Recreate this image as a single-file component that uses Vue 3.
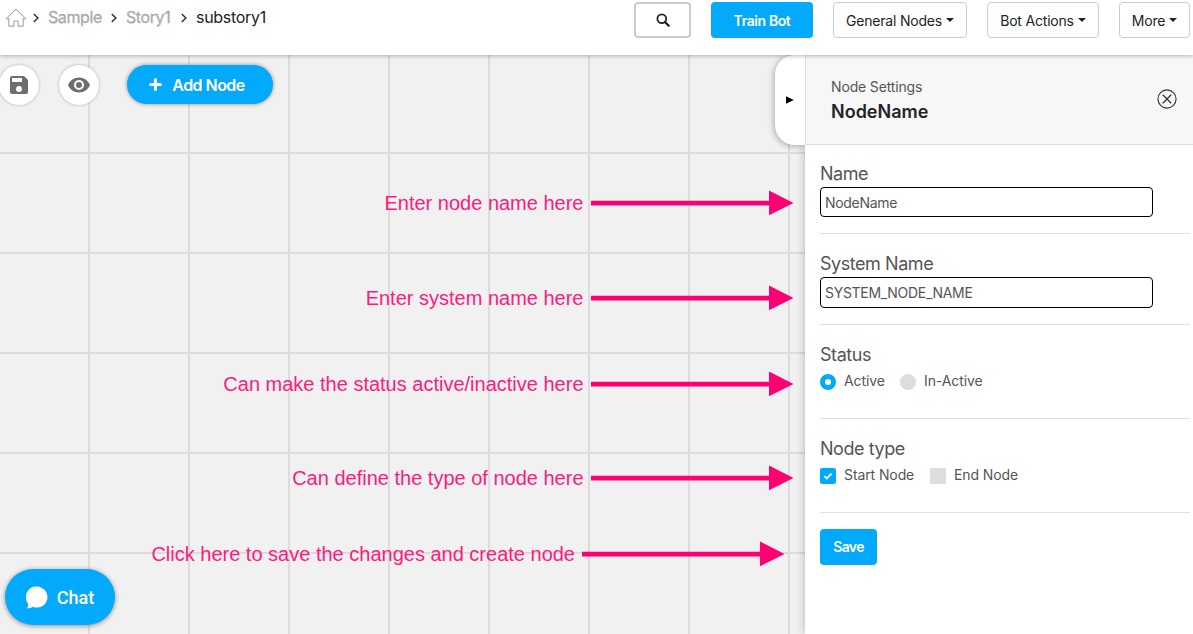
<script setup>
const crumbs = ['Sample', 'Story1']
const menus = [
  { label: 'General Nodes', cls: 'general' },
  { label: 'Bot Actions', cls: 'actions' },
  { label: 'More', cls: 'more' }
]
const notes = [
  { text: 'Enter node name here', cls: 'n1' },
  { text: 'Enter system name here', cls: 'n2' },
  { text: 'Can make the status active/inactive here', cls: 'n3' },
  { text: 'Can define the type of node here', cls: 'n4' },
  { text: 'Click here to save the changes and create node', cls: 'n5' }
]
</script>

<template>
  <div class="app">
    <header class="topbar">
      <nav class="crumbs">
        <svg class="home" width="22" height="20" viewBox="0 0 22 20" fill="none" stroke="#999" stroke-width="1">
          <path d="M1.2 10.6 11 1.3l9.800 9.300-.9 1-1.700-1.500v8.100h-5.200v-5.300H9v5.300H3.800v-8.100l-1.700 1.500z" stroke-linejoin="round" />
        </svg>
        <svg class="chev" width="6" height="10" viewBox="0 0 6 10"><path d="M.8 1 4.900 5 .8 9" /></svg>
        <template v-for="c in crumbs" :key="c">
          <span class="crumb" :class="c.toLowerCase()">{{ c }}</span>
          <svg class="chev" width="6" height="10" viewBox="0 0 6 10"><path d="M.8 1 4.900 5 .8 9" /></svg>
        </template>
        <span class="crumb current">substory1</span>
      </nav>
      <div class="actions-bar">
        <button class="btn search">
          <svg width="14" height="14" viewBox="0 0 14 14" fill="none" stroke="#222">
            <circle cx="5.800" cy="5.800" r="4.400" stroke-width="1.800" />
            <path d="m9 9 3.700 3.700" stroke-width="2.300" stroke-linecap="round" />
          </svg>
        </button>
        <button class="btn train"><span>Train Bot</span></button>
        <button v-for="m in menus" :key="m.label" class="btn menu" :class="m.cls">
          <span>{{ m.label }}</span><i class="caret"></i>
        </button>
      </div>
    </header>

    <main class="workspace">
      <section class="canvas">
        <div class="tools">
          <button class="round">
            <svg width="24" height="24" viewBox="0 0 24 24" fill="#6e6e6e">
              <path d="M17 3H5a2 2 0 0 0-2 2v14a2 2 0 0 0 2 2h14c1.100 0 2-.9 2-2V7zm-5 16a3 3 0 1 1 0-6 3 3 0 0 1 0 6m3-10H5V5h10z" />
            </svg>
          </button>
          <button class="round eye">
            <svg width="24" height="24" viewBox="0 0 24 24" fill="#6e6e6e">
              <path d="M12 4.500C7 4.500 2.730 7.610 1 12c1.730 4.390 6 7.500 11 7.500s9.270-3.110 11-7.500c-1.730-4.390-6-7.500-11-7.500M12 17a5 5 0 1 1 0-10 5 5 0 0 1 0 10m0-8a3 3 0 1 0 0 6 3 3 0 0 0 0-6" />
            </svg>
          </button>
          <button class="add">
            <svg width="13" height="13" viewBox="0 0 13 13" stroke="#fff" stroke-width="3" stroke-linecap="round">
              <path d="M6.500 1.600v9.800M1.600 6.500h9.800" />
            </svg>
            <span>Add Node</span>
          </button>
        </div>

        <div v-for="n in notes" :key="n.cls" class="note" :class="n.cls">
          <span>{{ n.text }}</span>
          <svg width="203" height="26" viewBox="0 0 203 26" fill="#ff0073">
            <path d="M0 10.700h178V.5L202.500 13 178 25.200V15.500H0z" />
          </svg>
        </div>

        <button class="chat">
          <svg width="22" height="23" viewBox="0 0 22 23" fill="#fff">
            <path d="M11 .6a10.500 10.500 0 1 1-4.300 20.100c-1.600 1.200-3.600 1.700-5.700 1.500.8-1.200 1.300-2.500 1.200-4.500A10.500 10.500 0 0 1 11 .6z" />
          </svg>
          <span>Chat</span>
        </button>
        <button class="handle">
          <svg width="8" height="8" viewBox="0 0 8 8"><path d="M0 .2 7.800 4 0 7.800z" /></svg>
        </button>
      </section>

      <aside class="panel">
        <div class="panel-head">
          <div class="titles">
            <span class="sub">Node Settings</span>
            <strong class="title">NodeName</strong>
          </div>
          <svg class="close" width="20" height="20" viewBox="0 0 20 20" fill="none" stroke="#333">
            <circle cx="10" cy="10" r="9.100" stroke-width="1.100" />
            <path d="m5.800 5.800 8.400 8.400m0-8.400-8.400 8.400" stroke-width="1.300" />
          </svg>
        </div>
        <div class="body">
          <div class="group name">
            <label class="heading">Name</label>
            <div class="field">NodeName</div>
          </div>
          <div class="group system">
            <label class="heading">System Name</label>
            <div class="field">SYSTEM_NODE_NAME</div>
          </div>
          <div class="group status">
            <div class="heading">Status</div>
            <div class="options">
              <i class="radio on"></i><span class="o1">Active</span>
              <i class="radio"></i><span class="o2">In-Active</span>
            </div>
          </div>
          <div class="group type">
            <div class="heading">Node type</div>
            <div class="options">
              <i class="check on">
                <svg width="16" height="16" viewBox="0 0 16 16" fill="none" stroke="#fff" stroke-width="1.800"><path d="m4.500 8.200 2.300 2.200 4.700-4.700" /></svg>
              </i><span class="o3">Start Node</span>
              <i class="check"></i><span class="o4">End Node</span>
            </div>
          </div>
          <button class="btn save"><span>Save</span></button>
        </div>
      </aside>
    </main>
  </div>
</template>

<style>
body { margin: 0; overflow: hidden; }
</style>

<style scoped>
.app { width: 1193px; height: 634px; display: flex; flex-direction: column; overflow: hidden; background: #fff; font-family: Inter, "Liberation Sans", sans-serif; color: #212529; }
* { box-sizing: border-box; }
button { font-family: inherit; padding: 0; border: 0; white-space: nowrap; }
svg { display: block; flex: none; }
.topbar { height: 55px; flex: none; display: flex; justify-content: space-between; background: #fff; box-shadow: 0 1px 4px rgba(0,0,0,.28); position: relative; z-index: 5; }
.crumbs { display: flex; align-items: center; height: 35px; padding-left: 5px; font-size: 16px; }
.home { margin-right: 6px; }
.chev { fill: none; stroke: #333; stroke-width: 1.500; }
.crumb { color: #aaa; -webkit-text-stroke: .3px; white-space: nowrap; margin-left: 9px; letter-spacing: -.4px; line-height: 20px; padding-bottom: 2px; }
.sample { width: 63px; }
.story1 { width: 55px; }
.story1, .current { margin-left: 9px; }
.current { color: #222; -webkit-text-stroke: 0; letter-spacing: -.3px; }
.actions-bar { display: flex; gap: 20px; padding: 2px 3px 0 0; }
.btn { height: 36px; display: flex; align-items: center; justify-content: center; border-radius: 4px; font-size: 14px; color: #222; background: #fff; letter-spacing: -.2px; }
.search { width: 57px; border: 2px solid #ccc; }
.train { width: 102px; background: #03a9fb; color: #fff; font-weight: 600; letter-spacing: -.4px; }
.menu { border: 1px solid #ccc; }
.general { width: 134px; }
.actions { width: 112px; }
.more { width: 71px; }
.caret { border: 4px solid transparent; border-top-color: #222; border-bottom: 0; margin-left: 4px; }
.workspace { flex: 1; display: flex; min-height: 0; }
.canvas { width: 805px; flex: none; position: relative; background-color: #f1f1f1; background-image: linear-gradient(#dcdcdc 2px, transparent 2px), linear-gradient(90deg, #dcdcdc 2px, transparent 2px); background-size: 100px 100px; background-position: 0 -3px, -12px 0; }
.tools { display: flex; align-items: center; height: 60px; }
.round { width: 40px; height: 40px; border-radius: 50%; background: #fff; display: flex; align-items: center; justify-content: center; box-shadow: 0 0 3px rgba(0,0,0,.3); margin-left: -1px; }
.eye { margin-left: 20px; }
.add { width: 146px; height: 39px; border-radius: 20px; margin: 0 0 1px 28px; padding-right: 6px; background: #03a9fb; color: #fff; display: flex; align-items: center; justify-content: center; gap: 10px; font-size: 16px; font-weight: 600; letter-spacing: -.55px; box-shadow: 0 0 4px rgba(0,0,0,.4); }
.note { position: absolute; right: 11.500px; display: flex; align-items: center; gap: 7px; height: 26px; color: #ff1a7d; font: 20px/26px "Liberation Sans", Arial, sans-serif; white-space: nowrap; letter-spacing: 0; }
.n1 { top: 135px; }
.n2 { top: 230px; }
.n3 { top: 316px; }
.n4 { top: 410px; }
.n5 { top: 486px; right: 20px; }
.chat { position: absolute; left: 5px; top: 514px; width: 110px; height: 56px; border-radius: 28px; background: #03a9fb; color: #fff; display: flex; align-items: center; justify-content: center; gap: 9px; font: 500 18px Roboto, sans-serif; box-shadow: 0 1px 5px rgba(0,0,0,.4); }
.handle { position: absolute; z-index: 2; right: 0; top: 0; width: 30px; height: 90px; border-radius: 20px 0 0 20px; background: #fff; display: flex; align-items: center; padding-left: 11px; box-shadow: -1px 1px 6px rgba(0,0,0,.3); clip-path: inset(0 0 -10px -10px); }
.panel { width: 388px; background: #fff; box-shadow: -1px 0 8px rgba(0,0,0,.22); position: relative; clip-path: inset(0 0 0 -12px); }
.panel-head { height: 90px; background: #f7f7f7; border-bottom: 1px solid #ddd; border-left: 1px solid #ddd; display: flex; justify-content: space-between; padding: 22px 16px 0 25px; }
.titles { display: flex; flex-direction: column; }
.sub { font-size: 14px; line-height: 20px; color: #555; letter-spacing: -.15px; }
.title { font-size: 18px; line-height: 30px; font-weight: 600; letter-spacing: 0; }
.close { margin-top: 12px; }
.body { padding: 0 3px 0 15px; color: #555; }
.group { border-bottom: 1px solid #e1e1e1; padding-top: 16px; }
.name { height: 89px; }
.system { height: 91px; }
.status, .type { height: 94px; }
.system, .status, .type { padding-top: 17px; }
.heading { display: block; font-size: 18px; line-height: 25px; letter-spacing: -.45px; }
.field { width: 333px; height: 30px; border: 1px solid #000; border-radius: 4px; padding-left: 4px; margin-top: 1px; font-size: 14px; line-height: 29px; letter-spacing: -.3px; }
.system .field { height: 31px; }
.options { display: flex; align-items: center; height: 27px; font-size: 14px; letter-spacing: -.1px; }
.options span { margin-left: 8px; white-space: nowrap; }
.o1 { width: 56px; }
.o3 { width: 86px; }
.radio, .check { width: 16px; height: 16px; flex: none; margin-top: 2px; background: #ddd; }
.radio { border-radius: 50%; }
.radio.on { background: #fff; border: 5px solid #03a9fb; }
.check { border-radius: 2px; }
.check.on { background: #03a9fb; }
.save { width: 57px; margin-top: 16px; padding-bottom: 1px; background: #03a9fb; color: #fff; font-weight: 600; letter-spacing: -.6px; }
</style>
